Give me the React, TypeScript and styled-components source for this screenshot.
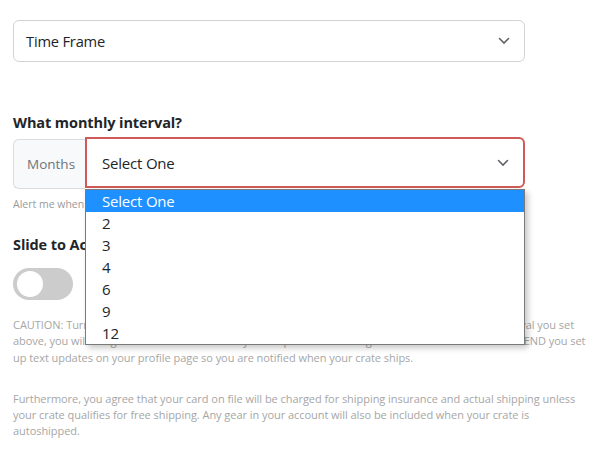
// Dependencies
import React from "react";
import styled, { createGlobalStyle } from "styled-components";

const GlobalStyle = createGlobalStyle`
  body {
    margin: 0;
    background: #ffffff;
    font-family: "Open Sans", "Noto Sans", sans-serif;
    color: #212529;
  }
`;

const Page = styled.div`
  display: flex;
  flex-direction: column;
  width: 576px;
  padding: 20px 0 0 13px;
`;

const SelectBox = styled.div<{ $invalid?: boolean; $attached?: boolean }>`
  position: relative;
  display: flex;
  align-items: center;
  justify-content: space-between;
  box-sizing: border-box;
  height: ${(p) => (p.$invalid ? "51px" : "42px")};
  width: ${(p) => (p.$attached ? "440px" : "512px")};
  padding: 0 14px 0 ${(p) => (p.$invalid ? "15px" : "12px")};
  border: ${(p) => (p.$invalid ? "2px solid #d05a5a" : "1px solid #d3d3d3")};
  border-radius: ${(p) => (p.$attached ? "0 6px 6px 0" : "6px")};
  background: #fff;
  font-size: ${(p) => (p.$invalid ? "15px" : "14.7px")};
  letter-spacing: -0.2px;
  color: #212529;
  margin-top: ${(p) => (p.$attached ? "-1px" : "0")};
`;

const Chevron = () => (
  <svg width="12" height="8" viewBox="0 0 12 8" fill="none">
    <path d="M1.5 1.5 L6 6 L10.5 1.5" stroke="#5f6368" strokeWidth="1.6" strokeLinecap="round" />
  </svg>
);

const Heading = styled.div<{ $top: number }>`
  margin-top: ${(p) => p.$top}px;
  font-size: 14.5px;
  font-weight: 700;
  letter-spacing: -0.1px;
  line-height: 20px;
  color: #212529;
`;

const InputGroup = styled.div`
  position: relative;
  display: flex;
  align-items: flex-start;
  margin-top: 5px;
`;

const Addon = styled.div`
  display: flex;
  align-items: center;
  box-sizing: border-box;
  height: 50px;
  width: 72px;
  margin-top: 1px;
  padding-left: 13px;
  background: #f8f9fa;
  border: 1px solid #dcdcdc;
  border-right: none;
  border-radius: 6px 0 0 6px;
  font-size: 13.5px;
  color: #6c757d;
`;

const OptionList = styled.ul`
  position: absolute;
  left: 72px;
  top: 51px;
  z-index: 5;
  box-sizing: border-box;
  width: 440px;
  margin: 0;
  padding: 0;
  list-style: none;
  background: #fff;
  border: 1px solid #7a7a7a;
  box-shadow: 3px 3px 6px rgba(0, 0, 0, 0.22);
`;

const Option = styled.li<{ $active?: boolean }>`
  height: 22px;
  line-height: 22px;
  padding-left: 16px;
  font-size: 15px;
  letter-spacing: -0.2px;
  background: ${(p) => (p.$active ? "#1e90ff" : "#fff")};
  color: ${(p) => (p.$active ? "#fff" : "#212529")};
`;

const Hint = styled.div`
  margin-top: 8px;
  font-size: 10.5px;
  color: #9a9a9a;
  line-height: 14px;
`;

const Toggle = styled.div`
  position: relative;
  width: 60px;
  height: 32px;
  margin-top: 13px;
  border-radius: 16px;
  background: #cccccc;
`;

const Knob = styled.span`
  position: absolute;
  left: 4px;
  top: 3px;
  width: 26px;
  height: 26px;
  border-radius: 50%;
  background: #fff;
`;

const Note = styled.p<{ $top: number }>`
  margin: ${(p) => p.$top}px 0 0;
  font-size: 11px;
  line-height: 16.3px;
  color: #a6a6a6;
  letter-spacing: -0.05px;
`;

const options = ["Select One", "2", "3", "4", "6", "9", "12"];

const App = () => {
  return (
    <>
      <GlobalStyle />
      <Page>
        <SelectBox>
          <span>Time Frame</span>
          <Chevron />
        </SelectBox>

        <Heading $top={51}>What monthly interval?</Heading>
        <InputGroup>
          <Addon>Months</Addon>
          <SelectBox $invalid $attached>
            <span>Select One</span>
            <Chevron />
          </SelectBox>
          <OptionList>
            {options.map((o, i) => (
              <Option key={o} $active={i === 0}>
                {o}
              </Option>
            ))}
          </OptionList>
        </InputGroup>
        <Hint>Alert me when my crate is about to autoship</Hint>

        <Heading $top={24}>Slide to Activate Autoship</Heading>
        <Toggle>
          <Knob />
        </Toggle>

        <Note $top={17}>
          CAUTION: Turning on autoship means your crate will ship on its own, without any notice, at the interval you set
          above, you will not get the chance to confirm your shipment before it goes out. We HIGHLY RECOMMEND you set
          up text updates on your profile page so you are notified when your crate ships.
        </Note>
        <Note $top={25}>
          Furthermore, you agree that your card on file will be charged for shipping insurance and actual shipping unless
          your crate qualifies for free shipping. Any gear in your account will also be included when your crate is
          autoshipped.
        </Note>
      </Page>
    </>
  );
};

export default App;
